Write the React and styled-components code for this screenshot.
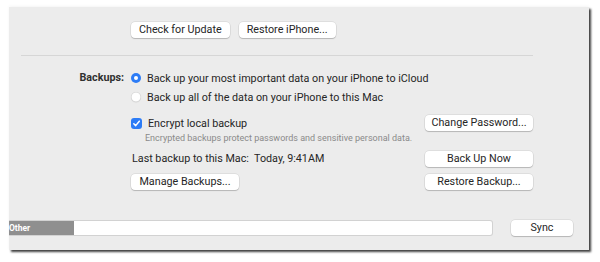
import React from "react";
import styled, { createGlobalStyle } from "styled-components";

const Global = createGlobalStyle`
  html, body { margin: 0; padding: 0; background: #ffffff; }
  body { font-family: Roboto, "Liberation Sans", sans-serif; }
  #root { width: 600px; height: 262px; overflow: hidden; }
`;

const Stage = styled.div`
  width: 600px;
  height: 262px;
  padding: 7px 0 0 9px;
  box-sizing: border-box;
`;

const Panel = styled.div`
  width: 580px;
  height: 243px;
  background: #ececec;
  box-sizing: border-box;
  box-shadow: 2px 2px 2px rgba(0, 0, 0, 0.75), 0 -1px 3px rgba(0, 0, 0, 0.04);
  display: flex;
  flex-direction: column;
  color: #262626;
  font-size: 10.75px;
`;

const TopRow = styled.div`
  display: flex;
  gap: 9px;
  padding: 15px 0 0 122px;
`;

const Button = styled.button`
  height: 16px;
  width: ${(p) => (p.$w ? `${p.$w}px` : "auto")};
  padding: 0 ${(p) => (p.$w ? 0 : 8)}px;
  background: #ffffff;
  border: none;
  border-radius: 4px;
  box-shadow: 0 0 0 0.5px rgba(0, 0, 0, 0.12), 0 1px 1px rgba(0, 0, 0, 0.18);
  font-family: inherit;
  font-size: 10.75px;
  color: #262626;
  line-height: 16px;
  white-space: nowrap;
  text-align: center;
`;

const Separator = styled.div`
  height: 1px;
  background: #d6d6d6;
  margin: 17px 56px 0 12px;
`;

const Section = styled.div`
  display: grid;
  grid-template-columns: 115px 1fr;
  column-gap: 7px;
  margin-top: 14px;
`;

const Label = styled.div`
  font-weight: 700;
  text-align: right;
  line-height: 16px;
  color: #303030;
`;

const Content = styled.div`
  display: flex;
  flex-direction: column;
  padding-right: 56px;
`;

const OptionRow = styled.div`
  display: flex;
  align-items: center;
  gap: 6px;
  height: 16px;
  margin-top: ${(p) => p.$mt || 0}px;
`;

const Radio = styled.span`
  width: 10px;
  height: 10px;
  border-radius: 50%;
  box-sizing: border-box;
  background: ${(p) => (p.$on ? "#2d7cf6" : "#ffffff")};
  box-shadow: ${(p) =>
    p.$on ? "none" : "inset 0 0 0 0.5px rgba(0,0,0,0.18), 0 0.5px 1px rgba(0,0,0,0.12)"};
  display: flex;
  align-items: center;
  justify-content: center;
  flex: none;
  &::after {
    content: "";
    width: 4px;
    height: 4px;
    border-radius: 50%;
    background: #fff;
    display: ${(p) => (p.$on ? "block" : "none")};
  }
`;

const Check = styled.span`
  width: 11px;
  height: 11px;
  border-radius: 3px;
  background: #2d7cf6;
  display: flex;
  align-items: center;
  justify-content: center;
  flex: none;
`;

const SplitRow = styled.div`
  display: flex;
  align-items: center;
  justify-content: space-between;
  height: 16px;
  margin-top: ${(p) => p.$mt || 0}px;
`;

const Helper = styled.div`
  font-size: 9px;
  color: #8a8a8a;
  margin: 1px 0 0 14px;
  line-height: 12px;
`;

const Plain = styled.span`
  line-height: 16px;
  padding-left: 1px;
`;

const BottomBar = styled.div`
  display: flex;
  align-items: center;
  margin-top: auto;
  margin-bottom: 14px;
  gap: 18px;
  padding-right: 15px;
`;

const Storage = styled.div`
  width: 484px;
  height: 16px;
  box-sizing: border-box;
  background: #ffffff;
  border: 1px solid #d2d2d2;
  border-left: none;
  border-radius: 0 3px 3px 0;
  display: flex;
  overflow: hidden;
`;

const Segment = styled.div`
  width: ${(p) => p.$w}px;
  background: #8f8f8f;
  color: #ffffff;
  font-size: 8.5px;
  font-weight: 700;
  line-height: 14px;
  overflow: hidden;
  white-space: nowrap;
`;

export default function App() {
  return (
    <>
      <Global />
      <Stage>
        <Panel>
          <TopRow>
            <Button>Check for Update</Button>
            <Button>Restore iPhone...</Button>
          </TopRow>
          <Separator />
          <Section>
            <Label>Backups:</Label>
            <Content>
              <OptionRow>
                <Radio $on />
                <span>Back up your most important data on your iPhone to iCloud</span>
              </OptionRow>
              <OptionRow $mt={3}>
                <Radio />
                <span>Back up all of the data on your iPhone to this Mac</span>
              </OptionRow>
              <SplitRow $mt={10}>
                <OptionRow>
                  <Check>
                    <svg width="9" height="9" viewBox="0 0 9 9">
                      <path d="M1.8 4.7 L3.7 6.6 L7.3 2.2" fill="none" stroke="#fff" strokeWidth="1.5" strokeLinecap="round" strokeLinejoin="round" />
                    </svg>
                  </Check>
                  <span>Encrypt local backup</span>
                </OptionRow>
                <Button $w={108}>Change Password...</Button>
              </SplitRow>
              <Helper>Encrypted backups protect passwords and sensitive personal data.</Helper>
              <SplitRow $mt={7}>
                <Plain>Last backup to this Mac:&nbsp; Today, 9:41AM</Plain>
                <Button $w={108}>Back Up Now</Button>
              </SplitRow>
              <SplitRow $mt={7}>
                <Button $w={108}>Manage Backups...</Button>
                <Button $w={108}>Restore Backup...</Button>
              </SplitRow>
            </Content>
          </Section>
          <BottomBar>
            <Storage>
              <Segment $w={65}>Other</Segment>
            </Storage>
            <Button $w={62}>Sync</Button>
          </BottomBar>
        </Panel>
      </Stage>
    </>
  );
}
